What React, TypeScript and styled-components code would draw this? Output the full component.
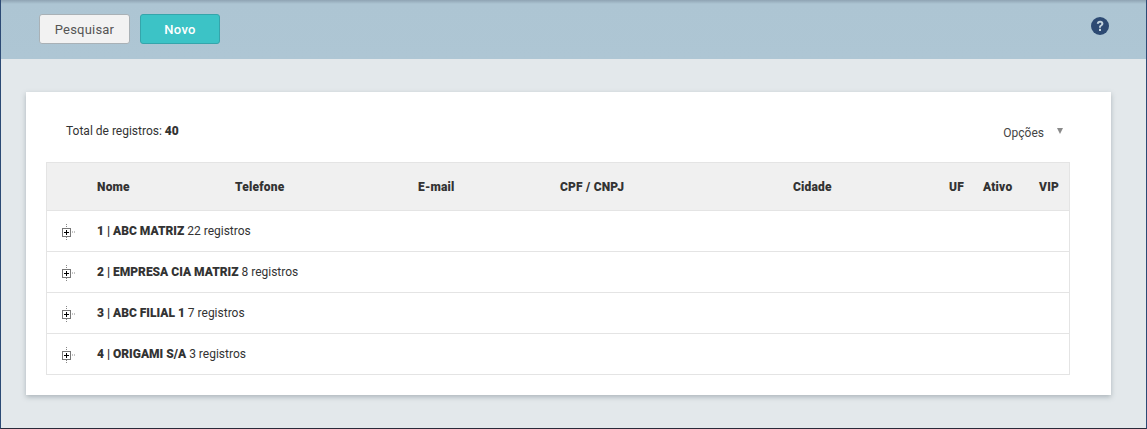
import React from "react";
import styled, { createGlobalStyle } from "styled-components";

const GlobalStyle = createGlobalStyle`
  html, body {
    margin: 0;
    padding: 0;
    height: 100%;
    background: #e3e8eb;
    overflow: hidden;
  }
  body {
    font-family: Roboto, "Liberation Sans", sans-serif;
    color: #333;
  }
`;

const Page = styled.div`
  box-sizing: border-box;
  width: 1147px;
  height: 429px;
  background: #e3e8eb;
  border-left: 1px solid #2c4a75;
  border-right: 1px solid #2c4a75;
  border-bottom: 1px solid #2a2a3a;
`;

const Toolbar = styled.header`
  box-sizing: border-box;
  height: 59px;
  padding: 14px 37px 0 38px;
  display: flex;
  align-items: flex-start;
  justify-content: space-between;
  background: linear-gradient(#8fa3b3 0, #adc5d3 4px, #aec6d4 100%);
`;

const Actions = styled.div`
  display: flex;
  gap: 10px;
`;

const Button = styled.button<{ $primary?: boolean }>`
  box-sizing: border-box;
  height: 30px;
  padding: 0;
  width: ${p => (p.$primary ? "80px" : "91px")};
  border-radius: 3px;
  border: 1px solid ${p => (p.$primary ? "#35a5ab" : "#a9b1b6")};
  background: ${p => (p.$primary ? "#3cc3c6" : "#f2f2f2")};
  color: ${p => (p.$primary ? "#fff" : "#555")};
  font-family: inherit;
  font-size: 13px;
  font-weight: ${p => (p.$primary ? 500 : 400)};
  letter-spacing: ${p => (p.$primary ? "0.3px" : "0.2px")};
`;

const HelpIcon = styled.svg`
  width: 18px;
  height: 18px;
  margin-top: 3px;
`;

const Content = styled.main`
  padding: 33px 35px 0 25px;
`;

const Card = styled.section`
  box-sizing: border-box;
  height: 303px;
  padding: 0 41px 0 20px;
  background: #fff;
  box-shadow: 0 2px 5px rgba(70, 85, 95, 0.35);
`;

const CardHead = styled.div`
  height: 70px;
  display: flex;
  justify-content: space-between;
  align-items: flex-start;
`;

const Total = styled.div`
  padding: 31px 0 0 20px;
  font-size: 12px;
  line-height: 16px;
  color: #333;
  b {
    font-weight: 900;
  }
`;

const Options = styled.div`
  display: flex;
  align-items: flex-start;
  gap: 13px;
  padding: 33px 7px 0 0;
  font-size: 12px;
  line-height: 16px;
  color: #444;
`;

const Caret = styled.span`
  margin-top: 3px;
  width: 0;
  height: 0;
  border-left: 3.5px solid transparent;
  border-right: 3.5px solid transparent;
  border-top: 6px solid #8a8a8a;
`;

const Table = styled.div`
  border: 1px solid #e4e4e4;
  font-size: 12px;
`;

const HeaderRow = styled.div`
  display: grid;
  grid-template-columns: 50px 138px 183px 142px 233px 156px 34px 56px 30px;
  align-items: center;
  height: 47px;
  background: #f0f0f0;
  font-weight: 900;
  letter-spacing: 0.2px;
  color: #333;
`;

const Row = styled.div`
  display: flex;
  align-items: center;
  height: 40px;
  border-top: 1px solid #e4e4e4;
  color: #333;
  b {
    font-weight: 900;
    margin-right: 3px;
  }
`;

const Expander = styled.svg`
  width: 50px;
  height: 16px;
  flex: none;
  margin-top: 2px;
`;

const columns = ["", "Nome", "Telefone", "E-mail", "CPF / CNPJ", "Cidade", "UF", "Ativo", "VIP"];

const groups = [
  { name: "1 | ABC MATRIZ", count: "22 registros" },
  { name: "2 | EMPRESA CIA MATRIZ", count: "8 registros" },
  { name: "3 | ABC FILIAL 1", count: "7 registros" },
  { name: "4 | ORIGAMI S/A", count: "3 registros" },
];

const App: React.FC = () => {
  return (
    <Page>
      <GlobalStyle />
      <Toolbar>
        <Actions>
          <Button>Pesquisar</Button>
          <Button $primary>Novo</Button>
        </Actions>
        <HelpIcon viewBox="0 0 18 18">
          <circle cx="9" cy="9" r="9" fill="#2d4a73" />
          <path
            d="M5.8 6.8C5.9 4.9 7.2 3.8 9.2 3.8c1.9 0 3.2 1.1 3.2 2.8 0 1.2-.6 1.9-1.5 2.5-.7.5-1 .8-1 1.6H8c0-1.4.4-2.1 1.3-2.7.7-.5 1-.8 1-1.3 0-.6-.4-1-1.1-1-.8 0-1.2.4-1.3 1.1z"
            fill="#c3d3de"
          />
          <rect x="8" y="11.8" width="2" height="2.2" fill="#c3d3de" />
        </HelpIcon>
      </Toolbar>
      <Content>
        <Card>
          <CardHead>
            <Total>
              Total de registros: <b>40</b>
            </Total>
            <Options>
              Opções
              <Caret />
            </Options>
          </CardHead>
          <Table>
            <HeaderRow>
              {columns.map(col => (
                <span key={col}>{col}</span>
              ))}
            </HeaderRow>
            {groups.map(group => (
              <Row key={group.name}>
                <Expander viewBox="0 0 50 16">
                  <path d="M19.5 0v3M19.5 13v3M25 8h3" stroke="#888" strokeDasharray="1 1" />
                  <rect x="15.5" y="4.5" width="8" height="8" fill="#fff" stroke="#777" />
                  <path d="M17 8.5h5M19.5 6v5" stroke="#000" />
                </Expander>
                <b>{group.name}</b>
                {group.count}
              </Row>
            ))}
          </Table>
        </Card>
      </Content>
    </Page>
  );
};

export default App;
